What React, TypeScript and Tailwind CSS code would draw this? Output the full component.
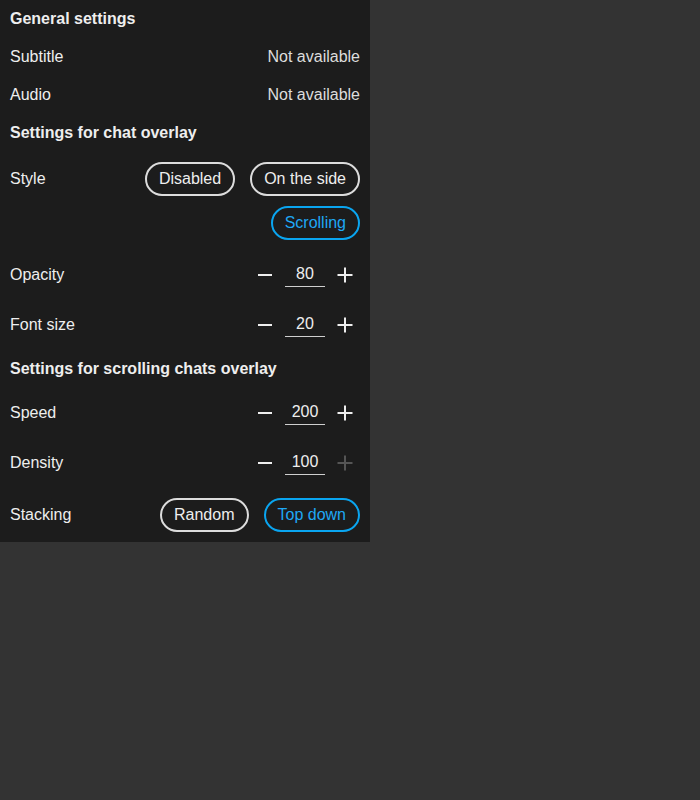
import { useState } from 'react';

type Opt = { label: string; value: string };

function Row({ label, children, className = '' }: { label: string; children?: React.ReactNode; className?: string }) {
  return (
    <div className={`flex items-start justify-between px-[10px] ${className}`}>
      <span className="leading-[34px]">{label}</span>
      {children}
    </div>
  );
}

function Header({ children }: { children: React.ReactNode }) {
  return <div className="h-[38px] flex items-center px-[10px] font-bold">{children}</div>;
}

function Pills({ options, value, onChange, className = '' }: { options: Opt[]; value: string; onChange: (v: string) => void; className?: string }) {
  return (
    <div className={`flex flex-wrap justify-end gap-x-[15px] gap-y-[10px] ${className}`}>
      {options.map((o) => (
        <button
          key={o.value}
          onClick={() => onChange(o.value)}
          className={`h-[34px] px-3 rounded-full border-2 leading-none ${
            o.value === value ? 'border-[#0aa5f0] text-[#1fa8f5]' : 'border-[#dcdcdc] text-[#eeeeee]'
          }`}
        >
          {o.label}
        </button>
      ))}
    </div>
  );
}

function Stepper({ value, onChange, max }: { value: number; onChange: (v: number) => void; max?: number }) {
  const atMax = max !== undefined && value >= max;
  return (
    <div className="flex items-center gap-[5px]">
      <button onClick={() => onChange(value - 10)} className="w-[30px] h-[30px] flex items-center justify-center text-[#eeeeee]">
        <svg width="16" height="16" viewBox="0 0 16 16">
          <path d="M1 8h14" stroke="currentColor" strokeWidth="2" />
        </svg>
      </button>
      <div className="w-[40px] h-[24px] border-b border-[#cfcfcf] text-center leading-[22px]">{value}</div>
      <button
        disabled={atMax}
        onClick={() => onChange(value + 10)}
        className={`w-[30px] h-[30px] flex items-center justify-center ${atMax ? 'text-[#555555]' : 'text-[#eeeeee]'}`}
      >
        <svg width="16" height="16" viewBox="0 0 16 16">
          <path d="M0.5 8h15M8 0.5v15" stroke="currentColor" strokeWidth="2" />
        </svg>
      </button>
    </div>
  );
}

export default function App() {
  const [style, setStyle] = useState('scrolling');
  const [stacking, setStacking] = useState('top');
  const [opacity, setOpacity] = useState(80);
  const [fontSize, setFontSize] = useState(20);
  const [speed, setSpeed] = useState(200);
  const [density, setDensity] = useState(100);

  return (
    <div className="min-h-[800px] bg-[#333333] text-[#eeeeee] text-base" style={{ fontFamily: '"Liberation Sans", Arial, sans-serif' }}>
      <div className="w-[370px] bg-[#1c1c1c]">
        <Header>General settings</Header>
        <div className="h-[38px] flex items-center justify-between px-[10px]">
          <span>Subtitle</span>
          <span className="text-[#dddddd]">Not available</span>
        </div>
        <div className="h-[38px] flex items-center justify-between px-[10px]">
          <span>Audio</span>
          <span className="text-[#dddddd]">Not available</span>
        </div>
        <Header>Settings for chat overlay</Header>
        <Row label="Style" className="pt-[10px] pb-[10px]">
          <Pills
            className="w-[230px]"
            value={style}
            onChange={setStyle}
            options={[
              { label: 'Disabled', value: 'disabled' },
              { label: 'On the side', value: 'side' },
              { label: 'Scrolling', value: 'scrolling' },
            ]}
          />
        </Row>
        <div className="h-[50px] flex items-center justify-between pl-[10px]">
          <span>Opacity</span>
          <div className="pr-[10px]">
            <Stepper value={opacity} onChange={setOpacity} max={100} />
          </div>
        </div>
        <div className="h-[50px] flex items-center justify-between pl-[10px]">
          <span>Font size</span>
          <div className="pr-[10px]">
            <Stepper value={fontSize} onChange={setFontSize} />
          </div>
        </div>
        <Header>Settings for scrolling chats overlay</Header>
        <div className="h-[50px] flex items-center justify-between pl-[10px]">
          <span>Speed</span>
          <div className="pr-[10px]">
            <Stepper value={speed} onChange={setSpeed} />
          </div>
        </div>
        <div className="h-[50px] flex items-center justify-between pl-[10px]">
          <span>Density</span>
          <div className="pr-[10px]">
            <Stepper value={density} onChange={setDensity} max={100} />
          </div>
        </div>
        <Row label="Stacking" className="pt-[10px] pb-[10px]">
          <Pills
            value={stacking}
            onChange={setStacking}
            options={[
              { label: 'Random', value: 'random' },
              { label: 'Top down', value: 'top' },
            ]}
          />
        </Row>
      </div>
    </div>
  );
}
